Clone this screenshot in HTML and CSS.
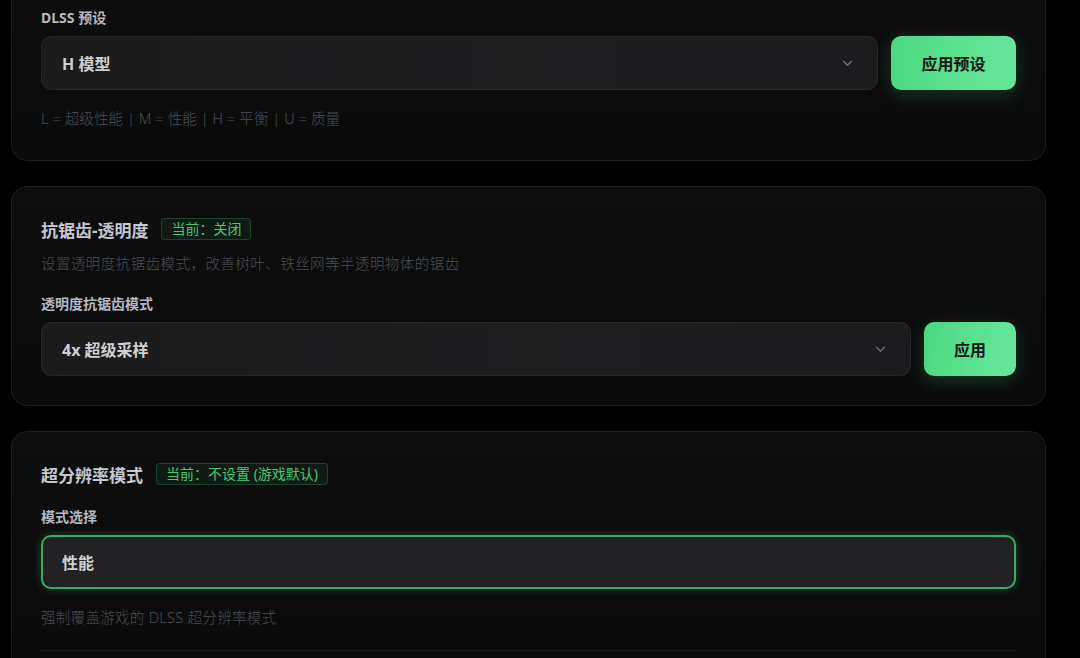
FILE: index.html
```html
<!DOCTYPE html>
<html lang="zh-CN">
<head>
<meta charset="utf-8">
<title>DLSS 设置</title>
<link rel="stylesheet" href="styles.css">
</head>
<body>
<div class="page">
  <section class="card card-first">
    <div class="field-label">DLSS 预设</div>
    <div class="row">
      <div class="select">
        <span class="select-text">H 模型</span>
        <svg class="chev" viewBox="0 0 12 8" width="11" height="7"><path d="M1.5 1.5 L6 6 L10.5 1.5" fill="none" stroke="currentColor" stroke-width="1.6" stroke-linecap="round" stroke-linejoin="round"/></svg>
      </div>
      <button class="btn btn-wide">应用预设</button>
    </div>
    <p class="hint hint-after">L = 超级性能 | M = 性能 | H = 平衡 | U = 质量</p>
  </section>

  <section class="card">
    <div class="title-row">
      <h2 class="title">抗锯齿-透明度</h2>
      <span class="badge">当前：关闭</span>
    </div>
    <p class="hint desc">设置透明度抗锯齿模式，改善树叶、铁丝网等半透明物体的锯齿</p>
    <div class="field-label">透明度抗锯齿模式</div>
    <div class="row">
      <div class="select">
        <span class="select-text">4x 超级采样</span>
        <svg class="chev" viewBox="0 0 12 8" width="11" height="7"><path d="M1.5 1.5 L6 6 L10.5 1.5" fill="none" stroke="currentColor" stroke-width="1.6" stroke-linecap="round" stroke-linejoin="round"/></svg>
      </div>
      <button class="btn btn-narrow">应用</button>
    </div>
  </section>

  <section class="card">
    <div class="title-row title-row-nodesc">
      <h2 class="title">超分辨率模式</h2>
      <span class="badge">当前：不设置 (游戏默认)</span>
    </div>
    <div class="field-label">模式选择</div>
    <div class="select select-active">
      <span class="select-text">性能</span>
    </div>
    <p class="hint hint-after hint-wide">强制覆盖游戏的 DLSS 超分辨率模式</p>
    <div class="divider"></div>
  </section>
</div>
</body>
</html>
```

FILE: styles.css
```css
* { box-sizing: border-box; }

html, body {
  margin: 0;
  padding: 0;
  background: #000;
  height: 100%;
  overflow: hidden;
}

body {
  font-family: "Noto Sans", "Noto Sans CJK SC", sans-serif;
  color: #c9ccd4;
}

.page {
  width: 1046px;
  padding-left: 11px;
  margin-top: -22px;
  display: flex;
  flex-direction: column;
  gap: 25px;
}

.card {
  background: linear-gradient(180deg, #0d0d0e 0%, #0a0a0a 100%);
  border: 1px solid #1d1d1f;
  border-radius: 16px;
  padding: 29px;
}

.card-first {
  padding-bottom: 32px;
}

.field-label {
  font-size: 14px;
  font-weight: 700;
  line-height: 20px;
  color: #b4b8c4;
  margin-bottom: 8px;
}

.row {
  display: flex;
  gap: 13px;
  align-items: stretch;
}

.select {
  flex: 1;
  height: 54px;
  border-radius: 10px;
  border: 1px solid #27272a;
  background: linear-gradient(90deg, #1b1b1c 0%, #1e1e20 60%, #1c1b1e 100%);
  display: flex;
  align-items: center;
  justify-content: space-between;
  padding: 0 24px 0 20px;
}

.select-text {
  font-size: 16px;
  font-weight: 700;
  color: #cfcfd1;
}

.chev {
  color: #6e6e74;
}

.select-active {
  flex: none;
  border: 2px solid #3fa963;
  background: #222224;
  box-shadow: 0 0 10px rgba(63, 180, 100, 0.35);
  padding-left: 19px;
}

.btn {
  border: none;
  height: 54px;
  border-radius: 10px;
  background: linear-gradient(100deg, #4ad881 0%, #5ae08e 50%, #68e69c 100%);
  color: #0b1710;
  font-family: "Noto Sans", "Noto Sans CJK SC", sans-serif;
  font-size: 16px;
  font-weight: 700;
  box-shadow: 0 4px 18px rgba(74, 222, 128, 0.22);
}

.btn-wide { width: 125px; }
.btn-narrow { width: 92px; }

.hint {
  margin: 0;
  font-size: 14.5px;
  font-weight: 300;
  line-height: 20px;
  color: #4a4e58;
  letter-spacing: 0.1px;
}

.hint-after {
  margin-top: 18px;
}

.hint-wide {
  letter-spacing: 0.3px;
}

.title-row {
  display: flex;
  align-items: center;
  gap: 13px;
  height: 26px;
}

.title-row-nodesc {
  margin-bottom: 20px;
}

.title {
  margin: 0;
  font-size: 17px;
  font-weight: 700;
  color: #c3c7d1;
}

.badge {
  font-size: 14px;
  line-height: 20px;
  padding: 0 9px;
  color: #48c874;
  background: rgba(40, 160, 80, 0.10);
  border: 1px solid rgba(60, 170, 100, 0.28);
  border-radius: 4px;
}

.desc {
  margin-top: 11px;
  margin-bottom: 21px;
  letter-spacing: 0.45px;
}

.divider {
  margin-top: 23px;
  height: 1px;
  background: #1c1c1e;
}
```
